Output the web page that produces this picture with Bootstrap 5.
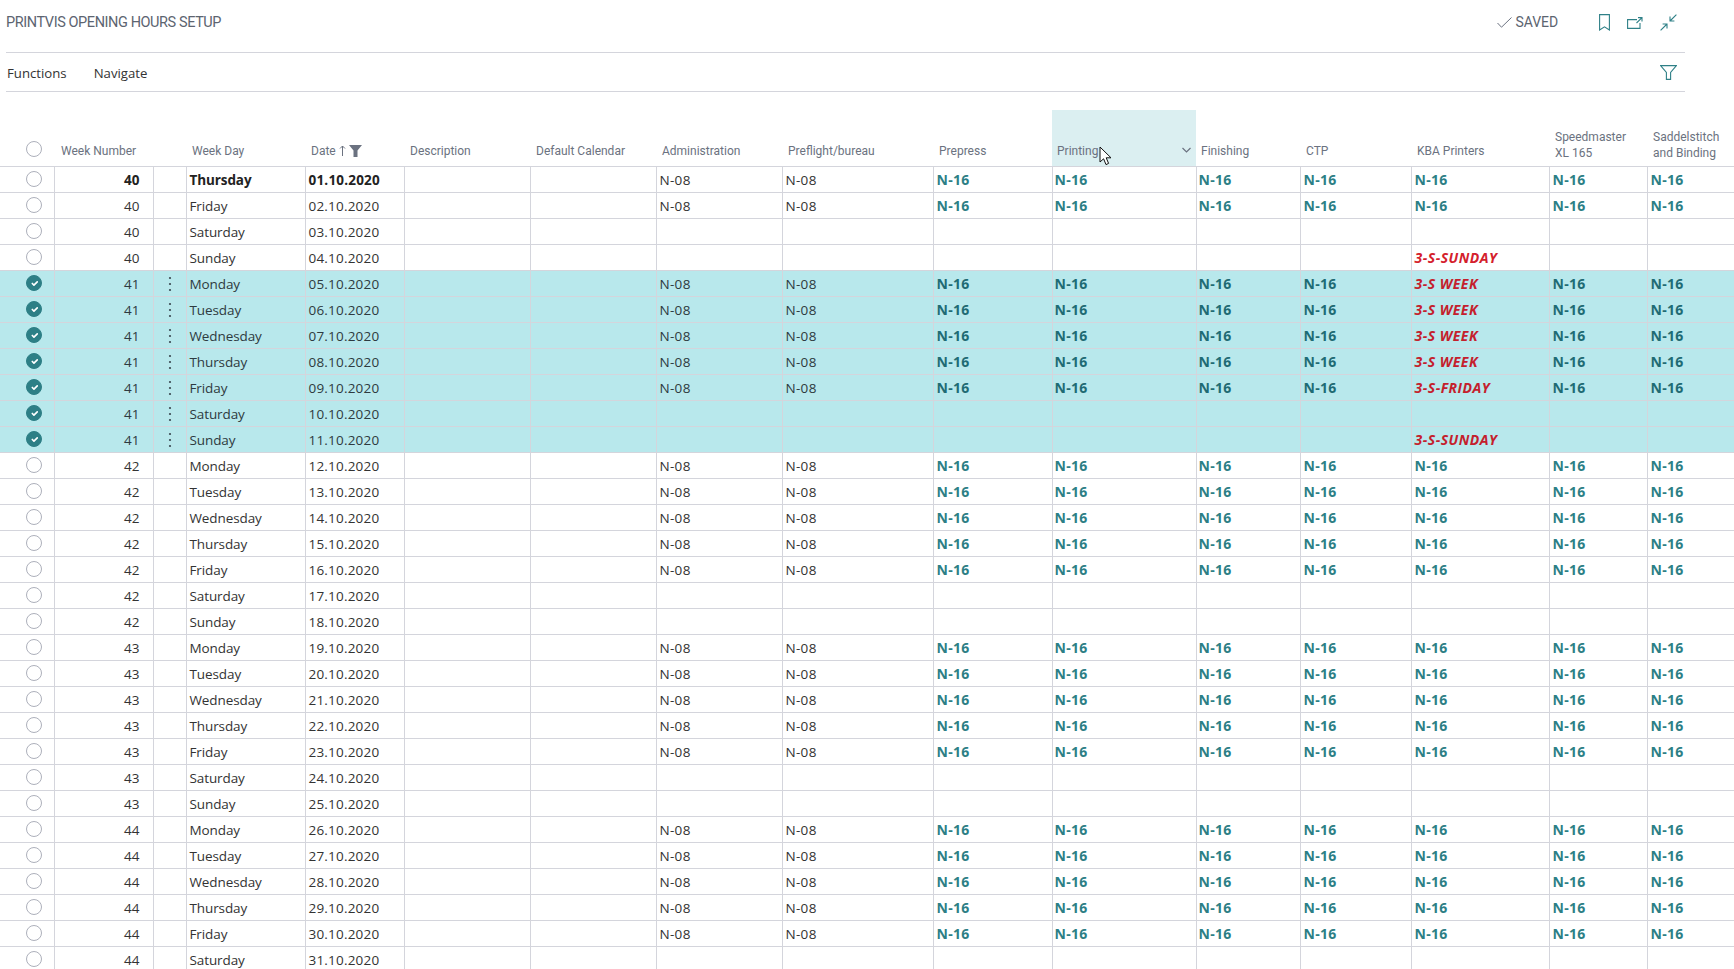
<!DOCTYPE html>
<html lang="en"><head><meta charset="utf-8"><title>PrintVis Opening Hours Setup</title>
<link href="https://cdn.jsdelivr.net/npm/bootstrap@5.3.0/dist/css/bootstrap.min.css" rel="stylesheet">
<style>
html,body{height:100%;overflow:hidden;background:#fff}
body{font-family:"Open Sans","Noto Sans",sans-serif;font-size:13.5px;color:#333}
.pagehead{margin:0 49px 0 6px;height:53px;padding-bottom:7px;border-bottom:1px solid #d4d5dc}
.pagetitle{font-family:Roboto,"Liberation Sans",sans-serif;font-size:14.5px;color:#5c6470;letter-spacing:-.42px;margin:0;font-weight:400}
.savedmark{font-family:Roboto,"Liberation Sans",sans-serif;font-size:14px;color:#5c6470;letter-spacing:-.1px}
.headicons{margin-left:41px;margin-right:8px;gap:17px}
.svgline{fill:none;stroke:#2f8087;stroke-width:1.1}
.actionbar{margin:0 49px 0 6px;height:39px;border-bottom:1px solid #d4d5dc}
.actionbar .nav-link{color:#333;padding:4px 0 0;font-size:13.2px;margin-left:1px;margin-right:26px}
.gridwrap{margin-top:18px;overflow:hidden}
.hoursgrid{table-layout:fixed;width:1747px;margin:0;border-collapse:collapse;--bs-table-bg:transparent}
.hoursgrid th{height:56px;vertical-align:bottom;padding:0 0 7px 6px;border:0;border-bottom:1px solid #d4d5dc;font-family:Roboto,"Liberation Sans",sans-serif;font-weight:400;font-size:12px;line-height:16px;color:#6b7280;position:relative}
.hoursgrid th.pick{padding:0 0 9px 0}
.hoursgrid th.weekhead{padding-left:7px}
.hoursgrid th.tightleft{padding-left:5px}
.hoursgrid th.twoline{padding-bottom:5px}
.hoursgrid th.hovered{background:#dbeff1}
.hoursgrid td{height:26px;padding:3px 3px 0;vertical-align:middle;border:0;border-bottom:1px solid #d4d5dc;border-left:1px solid #d4d5dc;line-height:1;color:#333;white-space:nowrap;overflow:hidden}
.hoursgrid td:first-child{border-left:0;padding:0}
.hoursgrid td:nth-child(2){text-align:right;padding-right:13px}
.hoursgrid td:nth-child(4){letter-spacing:-.1px}
.hoursgrid td:nth-child(5){letter-spacing:.2px}
.hoursgrid td:nth-child(8),.hoursgrid td:nth-child(9){letter-spacing:.3px}
.hoursgrid td:nth-child(n+10){font-weight:700;font-size:14px;letter-spacing:.3px;color:#2d7f86;padding-top:2px}
.hoursgrid td:nth-child(11),.hoursgrid td:nth-child(12){padding-left:2px}
.hoursgrid tr.chosen td{background:#b8e8ec;color:#2e3a40}
.hoursgrid tr.chosen td:nth-child(n+10){color:#1f6b74}
.hoursgrid tr.current td:nth-child(-n+5){font-weight:700;color:#222}
.hoursgrid td.redcode{color:#d4202c!important;font-style:italic;letter-spacing:.5px!important}
.hoursgrid tr.chosen td.redcode{color:#c4202c!important}
.rowpick{width:16px;height:16px;margin:0 0 0 26px;border-radius:50%!important;border:1.5px solid #adb0bb;display:block;background-size:11px}
.rowpick:checked{background-color:#2d7f86;border-color:#2d7f86}
.moredots{display:block;margin:-2px auto 0;fill:#3a4750}
.c1{width:54px}.c2{width:99px}.c3{width:33px}.c4{width:119px}.c5{width:99px}.c6,.c7,.c8{width:126px}.c9{width:151px}.c10{width:119px}.c11{width:144px}.c12{width:104px}.c13{width:111px}.c14{width:138px}.c15{width:98px}.c16{width:100px}
.sortmark{margin-left:3px;vertical-align:-1px}
.sortfilter{margin-left:3px;vertical-align:-2px}
.colchev{position:absolute;right:5px;bottom:13px}
.pointer{position:absolute;left:47px;top:36px;z-index:3}
</style></head><body>
<svg width="0" height="0" class="d-block"><defs><symbol id="dots" viewBox="0 0 4 16"><circle cx="2" cy="2" r="1.1"/><circle cx="2" cy="8" r="1.1"/><circle cx="2" cy="14" r="1.1"/></symbol></defs></svg>
<header class="pagehead d-flex align-items-center justify-content-between">
<h1 class="pagetitle">PRINTVIS OPENING HOURS SETUP</h1>
<div class="d-flex align-items-center">
<svg width="15" height="11" viewBox="0 0 15 11" class="me-1"><path d="M.5 6 4.5 10.2 14.5.5" fill="none" stroke="#6b7280" stroke-width="1"/></svg>
<span class="savedmark">SAVED</span>
<div class="d-flex align-items-center headicons">
<svg width="11" height="17" viewBox="0 0 11 17"><path class="svgline" d="M.6.6H10.4V16L5.5 12.8.6 16Z"/></svg>
<svg width="16" height="12" viewBox="0 0 16 12"><path class="svgline" d="M10 2.6H.6V11.4H13V6M9.5 6 15 .6M11 .6H15V4.6"/></svg>
<svg width="17" height="17" viewBox="0 0 17 17"><path class="svgline" d="M16.4.6 10 7M10 2.6V7H14.4M.6 16.4 7 10M2.6 10H7V14.4"/></svg>
</div></div>
</header>
<nav class="actionbar d-flex align-items-center justify-content-between">
<div class="nav"><a class="nav-link" href="#">Functions</a><a class="nav-link" href="#">Navigate</a></div>
<svg class="me-2" width="17" height="15" viewBox="0 0 17 15"><path class="svgline" d="M.6.6H16.4L10.6 7.4V14.4H6.4V7.4Z"/></svg>
</nav>
<div class="gridwrap">
<table class="table hoursgrid">
<colgroup><col class="c1"><col class="c2"><col class="c3"><col class="c4"><col class="c5"><col class="c6"><col class="c7"><col class="c8"><col class="c9"><col class="c10"><col class="c11"><col class="c12"><col class="c13"><col class="c14"><col class="c15"><col class="c16"></colgroup>
<thead><tr>
<th class="pick"><input class="form-check-input rowpick" type="checkbox" aria-label="Select all"></th>
<th class="weekhead" colspan="2">Week Number</th><th>Week Day</th>
<th>Date<svg class="sortmark" width="7" height="11" viewBox="0 0 7 11"><path d="M3.5 11V1M1 3.5 3.5 1 6 3.5" fill="none" stroke="#6b7280"/></svg><svg class="sortfilter" width="13" height="12" viewBox="0 0 13 12"><path d="M0 0H13L8.5 5.5V12H4.5V5.5Z" fill="#6b7280"/></svg></th>
<th>Description</th><th>Default Calendar</th><th>Administration</th><th>Preflight/bureau</th><th>Prepress</th>
<th class="hovered tightleft">Printing
<svg class="colchev" width="9" height="6" viewBox="0 0 9 6"><path d="M.5 1 4.5 5 8.5 1" fill="none" stroke="#6b7280" stroke-width="1.2"/></svg>
<svg class="pointer" width="13" height="20" viewBox="0 0 13 20"><path d="M1 1V16L4.6 12.8 7 18.6 9.6 17.4 7.2 11.8H12Z" fill="#fff" stroke="#111"/></svg></th>
<th class="tightleft">Finishing</th><th>CTP</th><th>KBA Printers</th><th class="twoline">Speedmaster<br>XL 165</th><th class="twoline">Saddelstitch<br>and Binding</th>
</tr></thead>
<tbody>
<tr class="current"><td><input class="form-check-input rowpick" type="checkbox" aria-label="Select row"><td>40<td><td>Thursday<td>01.10.2020<td><td><td>N-08<td>N-08<td>N-16<td>N-16<td>N-16<td>N-16<td>N-16<td>N-16<td>N-16
<tr><td><input class="form-check-input rowpick" type="checkbox" aria-label="Select row"><td>40<td><td>Friday<td>02.10.2020<td><td><td>N-08<td>N-08<td>N-16<td>N-16<td>N-16<td>N-16<td>N-16<td>N-16<td>N-16
<tr><td><input class="form-check-input rowpick" type="checkbox" aria-label="Select row"><td>40<td><td>Saturday<td>03.10.2020<td><td><td><td><td><td><td><td><td><td><td>
<tr><td><input class="form-check-input rowpick" type="checkbox" aria-label="Select row"><td>40<td><td>Sunday<td>04.10.2020<td><td><td><td><td><td><td><td><td class="redcode">3-S-SUNDAY<td><td>
<tr class="chosen"><td><input class="form-check-input rowpick" type="checkbox" checked aria-label="Select row"><td>41<td><svg class="moredots" width="4" height="16"><use href="#dots"/></svg><td>Monday<td>05.10.2020<td><td><td>N-08<td>N-08<td>N-16<td>N-16<td>N-16<td>N-16<td class="redcode">3-S WEEK<td>N-16<td>N-16
<tr class="chosen"><td><input class="form-check-input rowpick" type="checkbox" checked aria-label="Select row"><td>41<td><svg class="moredots" width="4" height="16"><use href="#dots"/></svg><td>Tuesday<td>06.10.2020<td><td><td>N-08<td>N-08<td>N-16<td>N-16<td>N-16<td>N-16<td class="redcode">3-S WEEK<td>N-16<td>N-16
<tr class="chosen"><td><input class="form-check-input rowpick" type="checkbox" checked aria-label="Select row"><td>41<td><svg class="moredots" width="4" height="16"><use href="#dots"/></svg><td>Wednesday<td>07.10.2020<td><td><td>N-08<td>N-08<td>N-16<td>N-16<td>N-16<td>N-16<td class="redcode">3-S WEEK<td>N-16<td>N-16
<tr class="chosen"><td><input class="form-check-input rowpick" type="checkbox" checked aria-label="Select row"><td>41<td><svg class="moredots" width="4" height="16"><use href="#dots"/></svg><td>Thursday<td>08.10.2020<td><td><td>N-08<td>N-08<td>N-16<td>N-16<td>N-16<td>N-16<td class="redcode">3-S WEEK<td>N-16<td>N-16
<tr class="chosen"><td><input class="form-check-input rowpick" type="checkbox" checked aria-label="Select row"><td>41<td><svg class="moredots" width="4" height="16"><use href="#dots"/></svg><td>Friday<td>09.10.2020<td><td><td>N-08<td>N-08<td>N-16<td>N-16<td>N-16<td>N-16<td class="redcode">3-S-FRIDAY<td>N-16<td>N-16
<tr class="chosen"><td><input class="form-check-input rowpick" type="checkbox" checked aria-label="Select row"><td>41<td><svg class="moredots" width="4" height="16"><use href="#dots"/></svg><td>Saturday<td>10.10.2020<td><td><td><td><td><td><td><td><td><td><td>
<tr class="chosen"><td><input class="form-check-input rowpick" type="checkbox" checked aria-label="Select row"><td>41<td><svg class="moredots" width="4" height="16"><use href="#dots"/></svg><td>Sunday<td>11.10.2020<td><td><td><td><td><td><td><td><td class="redcode">3-S-SUNDAY<td><td>
<tr><td><input class="form-check-input rowpick" type="checkbox" aria-label="Select row"><td>42<td><td>Monday<td>12.10.2020<td><td><td>N-08<td>N-08<td>N-16<td>N-16<td>N-16<td>N-16<td>N-16<td>N-16<td>N-16
<tr><td><input class="form-check-input rowpick" type="checkbox" aria-label="Select row"><td>42<td><td>Tuesday<td>13.10.2020<td><td><td>N-08<td>N-08<td>N-16<td>N-16<td>N-16<td>N-16<td>N-16<td>N-16<td>N-16
<tr><td><input class="form-check-input rowpick" type="checkbox" aria-label="Select row"><td>42<td><td>Wednesday<td>14.10.2020<td><td><td>N-08<td>N-08<td>N-16<td>N-16<td>N-16<td>N-16<td>N-16<td>N-16<td>N-16
<tr><td><input class="form-check-input rowpick" type="checkbox" aria-label="Select row"><td>42<td><td>Thursday<td>15.10.2020<td><td><td>N-08<td>N-08<td>N-16<td>N-16<td>N-16<td>N-16<td>N-16<td>N-16<td>N-16
<tr><td><input class="form-check-input rowpick" type="checkbox" aria-label="Select row"><td>42<td><td>Friday<td>16.10.2020<td><td><td>N-08<td>N-08<td>N-16<td>N-16<td>N-16<td>N-16<td>N-16<td>N-16<td>N-16
<tr><td><input class="form-check-input rowpick" type="checkbox" aria-label="Select row"><td>42<td><td>Saturday<td>17.10.2020<td><td><td><td><td><td><td><td><td><td><td>
<tr><td><input class="form-check-input rowpick" type="checkbox" aria-label="Select row"><td>42<td><td>Sunday<td>18.10.2020<td><td><td><td><td><td><td><td><td><td><td>
<tr><td><input class="form-check-input rowpick" type="checkbox" aria-label="Select row"><td>43<td><td>Monday<td>19.10.2020<td><td><td>N-08<td>N-08<td>N-16<td>N-16<td>N-16<td>N-16<td>N-16<td>N-16<td>N-16
<tr><td><input class="form-check-input rowpick" type="checkbox" aria-label="Select row"><td>43<td><td>Tuesday<td>20.10.2020<td><td><td>N-08<td>N-08<td>N-16<td>N-16<td>N-16<td>N-16<td>N-16<td>N-16<td>N-16
<tr><td><input class="form-check-input rowpick" type="checkbox" aria-label="Select row"><td>43<td><td>Wednesday<td>21.10.2020<td><td><td>N-08<td>N-08<td>N-16<td>N-16<td>N-16<td>N-16<td>N-16<td>N-16<td>N-16
<tr><td><input class="form-check-input rowpick" type="checkbox" aria-label="Select row"><td>43<td><td>Thursday<td>22.10.2020<td><td><td>N-08<td>N-08<td>N-16<td>N-16<td>N-16<td>N-16<td>N-16<td>N-16<td>N-16
<tr><td><input class="form-check-input rowpick" type="checkbox" aria-label="Select row"><td>43<td><td>Friday<td>23.10.2020<td><td><td>N-08<td>N-08<td>N-16<td>N-16<td>N-16<td>N-16<td>N-16<td>N-16<td>N-16
<tr><td><input class="form-check-input rowpick" type="checkbox" aria-label="Select row"><td>43<td><td>Saturday<td>24.10.2020<td><td><td><td><td><td><td><td><td><td><td>
<tr><td><input class="form-check-input rowpick" type="checkbox" aria-label="Select row"><td>43<td><td>Sunday<td>25.10.2020<td><td><td><td><td><td><td><td><td><td><td>
<tr><td><input class="form-check-input rowpick" type="checkbox" aria-label="Select row"><td>44<td><td>Monday<td>26.10.2020<td><td><td>N-08<td>N-08<td>N-16<td>N-16<td>N-16<td>N-16<td>N-16<td>N-16<td>N-16
<tr><td><input class="form-check-input rowpick" type="checkbox" aria-label="Select row"><td>44<td><td>Tuesday<td>27.10.2020<td><td><td>N-08<td>N-08<td>N-16<td>N-16<td>N-16<td>N-16<td>N-16<td>N-16<td>N-16
<tr><td><input class="form-check-input rowpick" type="checkbox" aria-label="Select row"><td>44<td><td>Wednesday<td>28.10.2020<td><td><td>N-08<td>N-08<td>N-16<td>N-16<td>N-16<td>N-16<td>N-16<td>N-16<td>N-16
<tr><td><input class="form-check-input rowpick" type="checkbox" aria-label="Select row"><td>44<td><td>Thursday<td>29.10.2020<td><td><td>N-08<td>N-08<td>N-16<td>N-16<td>N-16<td>N-16<td>N-16<td>N-16<td>N-16
<tr><td><input class="form-check-input rowpick" type="checkbox" aria-label="Select row"><td>44<td><td>Friday<td>30.10.2020<td><td><td>N-08<td>N-08<td>N-16<td>N-16<td>N-16<td>N-16<td>N-16<td>N-16<td>N-16
<tr><td><input class="form-check-input rowpick" type="checkbox" aria-label="Select row"><td>44<td><td>Saturday<td>31.10.2020<td><td><td><td><td><td><td><td><td><td><td>
</tbody></table>
</div>
<script src="https://cdn.jsdelivr.net/npm/bootstrap@5.3.0/dist/js/bootstrap.bundle.min.js"></script>
</body></html>
